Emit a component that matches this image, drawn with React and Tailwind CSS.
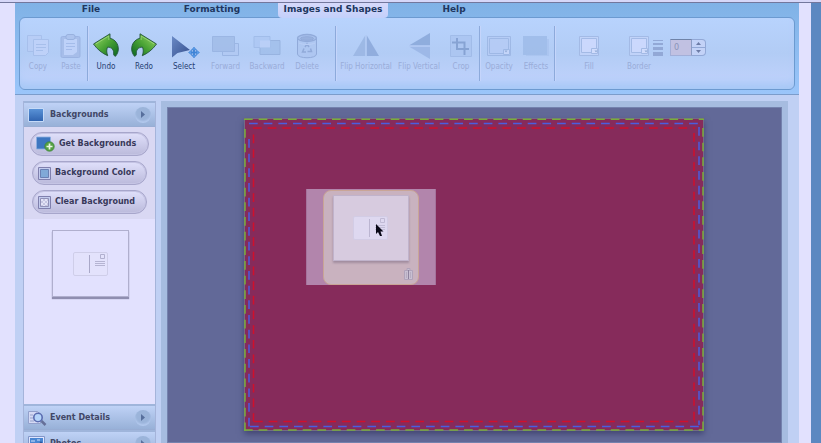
import React from "react";

function CopyIcon() {
  return (
    <svg width="24" height="24" viewBox="0 0 24 24" fill="#b9cdf6" stroke="#a3bbe8" aria-hidden="true">
      <path d="M1.500 1.500h14v16h-14z" />
      <path d="M7.500 5.500h15v13l-3 3h-12z" fill="#c2d3fa" />
      <path d="M10 10.500h10M10 13.500h10M10 16.500h7" />
    </svg>
  );
}

function PasteIcon() {
  return (
    <svg width="24" height="26" viewBox="0 0 24 26" aria-hidden="true">
      <rect x="2" y="3.500" width="19" height="21" rx="1.500" fill="#a3b9e6" stroke="#93abdc" />
      <path d="M5 6h13v13l-4 3H5z" fill="#c2d3fa" />
      <rect x="7" y="1.500" width="9" height="5" rx="2" fill="#a9bfeb" stroke="#8fa7d6" />
      <path d="M7 10.500h9M7 13.500h9M7 16.500h6" stroke="#9fb6e6" />
    </svg>
  );
}

function Arrow({ flip }) {
  const id = flip ? "redoGreen" : "undoGreen";
  return (
    <svg width="28" height="26" viewBox="0 0 28 26" aria-hidden="true">
      <defs>
        <linearGradient id={id} x1="0" y1="0" x2="1" y2="1">
          <stop offset="0" stopColor="#a0dc6a" />
          <stop offset="0.5" stopColor="#4ba436" />
          <stop offset="1" stopColor="#0a6420" />
        </linearGradient>
      </defs>
      <g transform={flip ? "translate(28 0) scale(-1 1)" : undefined}>
        <path
          d="M1.500 11 18 .8v4.400c5.400 1.500 8.300 5.700 8.300 10.800 0 2.800-1 5-2.800 7.300-1-.3-1.500-.8-1.900-1.700.7-4.400-1.700-7.400-6-7.500-1.200 2.400-1.200 5 .1 8.600C10.500 20.500 5.300 16.500 1.500 11z"
          fill={`url(#${id})`} stroke="#24553a" strokeWidth="0.900" strokeLinejoin="round"
        />
        <path d="M4 10.800 16.800 3v4" fill="none" stroke="#c5efa0" strokeWidth="0.800" opacity="0.600" />
      </g>
    </svg>
  );
}

function SelectIcon() {
  return (
    <svg width="32" height="26" viewBox="0 0 32 26" aria-hidden="true">
      <defs>
        <linearGradient id="pointer" x1="0" y1="0" x2="1" y2="1">
          <stop offset="0" stopColor="#6a8ac6" />
          <stop offset="1" stopColor="#36508e" />
        </linearGradient>
      </defs>
      <path d="M4 3v21.500l5.500-4.500L22 17z" fill="url(#pointer)" />
      <path d="M26 15.500v8M22 19.500h8" stroke="#3f84d6" strokeWidth="1.800" />
      <path
        d="M26 14l2.500 3h-5zM26 25l-2.500-3h5zM20.500 19.500l3-2.500v5zM31.500 19.500 28.500 17v5z"
        fill="#5a9dea" stroke="#3b7acb" strokeWidth="0.500"
      />
    </svg>
  );
}

function ForwardIcon() {
  return (
    <svg width="28" height="24" viewBox="0 0 28 24" stroke="#93aedd" aria-hidden="true">
      <path d="M10.500 9.500h16v12h-16z" fill="#b1c8f3" />
      <path d="M.5 2.500h22v15H.5z" fill="#9fbae6" />
    </svg>
  );
}

function BackwardIcon() {
  return (
    <svg width="28" height="24" viewBox="0 0 28 24" aria-hidden="true">
      <path d="M7 6.500h20v14H7z" fill="#9fbde9" stroke="#8fabd9" />
      <path d="M1 2.500h16v11H1z" fill="#adc7f3" stroke="#9bb7e5" />
      <path d="M7 6.500h10v7H7z" fill="#bdd0f8" />
    </svg>
  );
}

function BinIcon() {
  return (
    <svg width="24" height="26" viewBox="0 0 24 26" fill="none" stroke="#869fd0" aria-hidden="true">
      <path d="M2.500 5v16c0 5 19 5 19 0V5" fill="#adc5f0" />
      <ellipse cx="12" cy="5" rx="9.500" ry="3.500" fill="#a3bbe8" strokeWidth="1.300" />
      <ellipse cx="12" cy="5.500" rx="6.500" ry="1.800" fill="#8fa7d6" />
      <path d="M10 14l2-3 2 3M15.500 15.500l1 3h-4M11 19H7.500l1.500-3.500" strokeWidth="1.500" />
      <path d="M4 10c4 2 12 2 16 0" stroke="#bdd0f6" />
    </svg>
  );
}

function FlipHorizontalIcon() {
  return (
    <svg width="26" height="24" viewBox="0 0 26 24" aria-hidden="true">
      <path d="M12.500 1v21H0z" fill="#96b2e0" />
      <path d="M13.500 1v21H26z" fill="#86a3d6" />
      <path d="M13 1v21" stroke="#b9cef6" />
    </svg>
  );
}

function FlipVerticalIcon() {
  return (
    <svg width="26" height="26" viewBox="0 0 26 26" aria-hidden="true">
      <path d="M3 12.500 24 0v12.500z" fill="#83a2d5" />
      <path d="M3 13.500 24 26V13.500z" fill="#96b2e3" />
      <path d="M3 13h21" stroke="#b9cef6" />
    </svg>
  );
}

function CropIcon() {
  return (
    <svg width="22" height="22" viewBox="0 0 22 22" fill="none" aria-hidden="true">
      <path d="M.5.5h21v21H.5z" fill="#aac4f0" stroke="#9bb6e4" />
      <path d="M7 3v11h12M2 7.500h12.500V20" stroke="#7895c8" strokeWidth="2" />
    </svg>
  );
}

function SwatchIcon({ hollow }) {
  return (
    <svg width={hollow ? "24" : "20"} height="20" viewBox={hollow ? "-2 0 24 20" : "0 0 20 20"} aria-hidden="true">
      {hollow ? (
        <g fill="#b6cbf5" stroke="#98b2e0">
          <path d="M-1.500.5h23v19h-23z" />
          <path d="M.5 2.500h19v15H.5z" />
          <path d="M14.500 13.500h6v5h-6z" fill="#cad8fb" />
        </g>
      ) : (
        <g fill="#c5d5fa" stroke="#9eb4e0">
          <path d="M.5.5h19v19H.5z" />
          <path d="M2.500 2.500h15v14h-15z" fill="#d3dcff" />
          <path d="M12.500 12.500h6v5h-6z" fill="#dce2ff" />
        </g>
      )}
      <path d="M15.500 14.500h3l-1.500 2z" fill="#869fcb" />
    </svg>
  );
}

function EffectsIcon() {
  return (
    <svg width="28" height="22" viewBox="0 0 28 22" aria-hidden="true">
      <path d="M4 4h23v17H4z" fill="#a9c3ef" />
      <path d="M1 1h24v19H1z" fill="#9bb9e7" />
    </svg>
  );
}

function Tool({ label, width, enabled, children }) {
  return (
    <button
      type="button"
      disabled={!enabled}
      className={`flex h-full flex-col items-center whitespace-nowrap ${width} ${enabled ? "text-[#243d70]" : "text-[#99acd8]"}`}
    >
      <span className={`mt-3 flex h-8 items-center justify-center ${enabled ? "" : "opacity-75"}`}>{children}</span>
      <span className="leading-[10px]">{label}</span>
    </button>
  );
}

function Divider() {
  return <div className="h-[55px] w-px shrink-0 bg-[#8daadb] shadow-[1px_0_0_#c5d5fb]" />;
}

function Toolbar() {
  return (
    <div
      className="flex h-[73px] items-center overflow-hidden rounded-md border border-[#6c9ad0] bg-linear-to-b from-[#b8d3fd] via-[#b2ccf5] to-[#c2d3fd] pl-px text-[8px] shadow-[inset_0_-10px_8px_-4px_#a6c8f6]"
      style={{ fontFamily: '"DejaVu Sans Condensed", "DejaVu Sans", sans-serif' }}
    >
      <Tool label="Copy" width="w-[34px]"><CopyIcon /></Tool>
      <Tool label="Paste" width="w-8"><PasteIcon /></Tool>
      <Divider />
      <Tool label="Undo" width="w-9" enabled><Arrow /></Tool>
      <Tool label="Redo" width="w-10" enabled><Arrow flip /></Tool>
      <Tool label="Select" width="w-10" enabled><SelectIcon /></Tool>
      <Tool label="Forward" width="w-[43px]"><ForwardIcon /></Tool>
      <Tool label="Backward" width="w-10"><BackwardIcon /></Tool>
      <Tool label="Delete" width="w-10"><BinIcon /></Tool>
      <div className="w-2" />
      <Divider />
      <div className="w-0.5" />
      <Tool label="Flip Horizontal" width="w-14"><FlipHorizontalIcon /></Tool>
      <Tool label="Flip Vertical" width="w-[50px]"><FlipVerticalIcon /></Tool>
      <Tool label="Crop" width="w-[34px]"><CropIcon /></Tool>
      <div className="w-px" />
      <Divider />
      <Tool label="Opacity" width="w-[38px]"><SwatchIcon hollow /></Tool>
      <Tool label="Effects" width="w-9"><EffectsIcon /></Tool>
      <Divider />
      <div className="w-4" />
      <Tool label="Fill" width="w-9"><SwatchIcon /></Tool>
      <div className="w-[18px]" />
      <Tool label="Border" width="w-7"><SwatchIcon /></Tool>
      <div className="flex items-center pb-3">
        <svg width="10" height="18" viewBox="0 0 10 18" fill="#92a8d6" aria-hidden="true">
          <path d="M0 1h10v1H0zM0 4h10v2H0zM0 8h10v3H0zM0 13h10v4H0z" />
        </svg>
        <div className="ml-[7px] flex h-[17px]">
          <input
            aria-label="Border width"
            defaultValue="0"
            className="w-[22px] border border-t-[#6f83a8] border-r-[#8b9cc4] border-b-[#a3afd8] border-l-[#a3afd8] bg-[#c1c1e2] pl-[3px] text-[9px] text-[#8b94b8] outline-none"
          />
          <div className="flex w-[14px] flex-col rounded-r border border-l-0 border-[#92a8d6] bg-[#c3d2f7]">
            <button type="button" aria-label="Increase border width" className="flex flex-1 items-center justify-center border-b border-[#92a8d6]">
              <svg width="5" height="3" viewBox="0 0 5 3" aria-hidden="true"><path d="M0 3 2.500 0 5 3z" fill="#6c7ba6" /></svg>
            </button>
            <button type="button" aria-label="Decrease border width" className="flex flex-1 items-center justify-center">
              <svg width="5" height="3" viewBox="0 0 5 3" aria-hidden="true"><path d="M0 0 2.500 3 5 0z" fill="#6c7ba6" /></svg>
            </button>
          </div>
        </div>
      </div>
    </div>
  );
}

function Tab({ label, width, active }) {
  return (
    <button
      type="button"
      role="tab"
      aria-selected={!!active}
      className={`flex h-[15px] justify-center whitespace-nowrap leading-[13px] ${width} ${active ? "relative rounded-b-sm bg-linear-to-b from-[#d6d8fb] to-[#c3d0fa]" : ""}`}
    >
      {label}
    </button>
  );
}

function PictureIcon() {
  return (
    <svg width="16" height="14" viewBox="0 0 16 14" aria-hidden="true">
      <defs>
        <linearGradient id="sky" x1="0" y1="0" x2="0" y2="1">
          <stop offset="0" stopColor="#5b94d8" />
          <stop offset="1" stopColor="#2f62ae" />
        </linearGradient>
      </defs>
      <path d="M.5.5h15v13H.5z" fill="url(#sky)" stroke="#c5daf8" />
    </svg>
  );
}

function DetailsIcon() {
  return (
    <svg width="19" height="16" viewBox="0 0 19 16" aria-hidden="true">
      <path d="M.5 1.500h9l3 3v9H.5z" fill="#d5daf5" stroke="#93a0cc" />
      <path d="M2 5h3M2 8h3M2 11h4" stroke="#98a3cb" />
      <circle cx="10" cy="7.500" r="4.200" fill="#b5d4fa" stroke="#5a6cb0" strokeWidth="1.600" />
      <path d="M13.500 11l4 4" stroke="#656f98" strokeWidth="2.500" />
    </svg>
  );
}

function PhotosIcon() {
  return (
    <svg width="17" height="15" viewBox="0 0 17 15" aria-hidden="true">
      <path d="M.5.5h16v14H.5z" fill="#dfe6ff" stroke="#8296c8" />
      <path d="M2 2h13v11H2z" fill="#4a86d2" />
      <path d="M2 12l4-4 3 2 4-5 2 3v5H2z" fill="#27549c" />
      <path d="M3 5h4M9 4h3" stroke="#cfe2ff" />
    </svg>
  );
}

function SectionHeader({ label, icon }) {
  return (
    <button
      type="button"
      className="flex h-[26px] w-full shrink-0 items-center border-t-2 border-b border-t-[#9fb5db] border-b-[#98add4] bg-linear-to-b from-[#bfd2f6] to-[#98b1d8] pr-1 pl-1 text-[#414766]"
    >
      <span className="flex w-[22px] items-center">{icon}</span>
      <span className="flex-1 text-left leading-[12px]">{label}</span>
      <span className="flex size-4 items-center justify-center rounded-full bg-[#9bb4da] shadow-[inset_0_-2px_2px_#b3c9ee]">
        <svg width="4" height="7" viewBox="0 0 4 7" aria-hidden="true"><path d="M0 0 4 3.500 0 7z" fill="#576f9c" /></svg>
      </span>
    </button>
  );
}

function PillButton({ label, width, children }) {
  return (
    <button
      type="button"
      className={`flex h-6 items-center gap-1 whitespace-nowrap rounded-full border border-[#a7a6cb] bg-linear-to-b from-[#e0e0fb] to-[#bbbadb] pl-[5px] text-[#38395a] shadow-[inset_0_0_0_1px_#c5c4e4] ${width}`}
    >
      {children}
      <span className="leading-[12px]">{label}</span>
    </button>
  );
}

function AddPictureIcon() {
  return (
    <svg width="19" height="16" viewBox="0 0 19 16" aria-hidden="true">
      <path d="M.5 1h14v12H.5z" fill="#3d76c0" stroke="#8eb0e0" strokeWidth="0.800" />
      <circle cx="13.500" cy="10.500" r="4.800" fill="#55a044" stroke="#397f38" strokeWidth="0.600" />
      <path d="M13.500 7.500v6M10.500 10.500h6" stroke="#eaf7e2" strokeWidth="1.700" />
    </svg>
  );
}

function ColorIcon({ clear }) {
  return (
    <svg width="13" height="13" viewBox="0 0 13 13" aria-hidden="true">
      <path d="M.5.5h12v12H.5z" fill="#c3cbee" stroke="#8080ae" />
      <path d="M2.500 2.500h8v8h-8z" fill={clear ? "#c5c6e2" : "#80a9d8"} stroke={clear ? "#9191b8" : "#6a80b4"} />
      {clear && <path d="M3 3h2v2H3zM7 3h2v2H7zM5 5h2v2H5zM9 5h1v2H9zM3 7h2v2H3zM7 7h2v2H7zM5 9h2v1H5z" fill="#e3e3f7" />}
    </svg>
  );
}

function Postcard() {
  return (
    <svg width="35" height="24" viewBox="0 0 35 24" fill="none" aria-hidden="true">
      <rect x="0.500" y="0.500" width="34" height="23" rx="1.500" fill="#e3e2fc" stroke="#cfcee9" />
      <path d="M16.500 3v18" stroke="#a9a8c8" />
      <path d="M27.500 2.500h4v4h-4z" stroke="#b1b0cf" />
      <path d="M22 9.500h10M22 11.500h10M22 13.500h10" stroke="#b5b4d2" />
    </svg>
  );
}

function Sidebar() {
  return (
    <aside className="mt-[6px] flex w-[133px] shrink-0 flex-col border-x border-[#a5b4da] bg-[#e2e1fe] text-[8px] font-bold">
      <SectionHeader label="Backgrounds" icon={<PictureIcon />} />
      <div className="flex flex-col items-center gap-[5px] bg-[#d9d8f3] py-[5px]">
        <PillButton label="Get Backgrounds" width="w-[119px]"><AddPictureIcon /></PillButton>
        <PillButton label="Background Color" width="w-[115px]"><ColorIcon /></PillButton>
        <PillButton label="Clear Background" width="w-[115px]"><ColorIcon clear /></PillButton>
      </div>
      <div className="flex h-[185px] shrink-0 justify-center pt-[11px] pl-px">
        <div className="flex h-[67px] w-[77px] items-center justify-center border border-[#b0afce] bg-[#e2e1fe] shadow-[0_2px_1px_#8f8eb0]">
          <Postcard />
        </div>
      </div>
      <SectionHeader label="Event Details" icon={<DetailsIcon />} />
      <SectionHeader label="Photos" icon={<PhotosIcon />} />
    </aside>
  );
}

function Guides() {
  return (
    <svg className="block" width="460" height="313" viewBox="0 0 460 313" fill="none" aria-hidden="true">
      <path d="M.5.5h459v312H.5z" stroke="#756b85" />
      <g strokeDasharray="8.700 5.970" strokeWidth="1.500">
        <g stroke="#78ad3c">
          <path d="M0 1.250h460M459 10v303M0 312h460M1 11v302" />
        </g>
        <g stroke="#4a5ee0">
          <path d="M5 5.500h450M455 9v298M6 308.500h450M5 21v288" />
        </g>
        <g stroke="#d0102c">
          <path d="M9 10h442M450 15v288M10 303.500h441M9.500 16.500v287" />
        </g>
      </g>
    </svg>
  );
}

function DragGhost() {
  return (
    <div className="absolute top-[71px] left-[62px] flex h-24 w-[130px] justify-center border-x border-[#a5739c] bg-[#b285ac] pt-px">
      <div className="flex w-24 flex-col items-center rounded-lg border border-[#c9a596] bg-[#c9b2bf] pt-1">
        <div className="flex h-[66px] w-[76px] items-center justify-center border border-[#c0b3cb] bg-[#d7cbdf] shadow-[0_2px_2px_#a18d9f]">
          <div className="opacity-60"><Postcard /></div>
        </div>
        <svg className="mt-[7px] mr-[5px] self-end" width="9" height="12" viewBox="0 0 9 12" aria-hidden="true">
          <path d="M.5 2.500h8v9h-8zM3 .5h3v2H3z" fill="#c8bfd2" stroke="#b0a3ba" />
          <path d="M4.500 2v9" stroke="#8d829e" />
          <path d="M2.500 4v6M6.500 4v6" stroke="#b7acc1" />
        </svg>
      </div>
    </div>
  );
}

function Workspace() {
  return (
    <main className="ml-[5px] mt-[6px] mr-[11px] flex min-w-0 flex-1 border-6 border-b-0 border-[#a6bce0]">
      <div className="flex flex-1 items-start justify-center overflow-hidden border border-[#7482ae] bg-[#626998] pt-[10px] pr-0.5">
        <div className="relative shrink-0 bg-[#862b5b] shadow-[0_3px_6px_#424672]">
          <Guides />
          <DragGhost />
          <svg className="absolute top-[106px] left-[131px]" width="9" height="13" viewBox="0 0 9 13" aria-hidden="true">
            <path d="M1 0v10l2-2 2 4h2L5.500 7.500h3z" fill="#090817" />
          </svg>
        </div>
      </div>
    </main>
  );
}

export default function App() {
  return (
    <div
      className="flex h-screen flex-col overflow-hidden bg-[#e2e1fe]"
      style={{ fontFamily: '"DejaVu Sans", Verdana, sans-serif' }}
    >
      <div className="h-[3px] shrink-0 border-b border-[#73779c] bg-[#d6d7f8]" />
      <div className="flex min-h-0 flex-1">
        <div className="w-[15px] shrink-0" />
        <div className="flex min-w-0 flex-1 flex-col bg-[#c0d0f4]">
          <header className="shrink-0 border-b border-[#7b9ccb] bg-linear-to-b from-[#80b2e6] to-[#9ac5fa] px-1 pb-1">
            <div role="tablist" className="-mb-px flex text-[9px] font-bold text-[#20365f]">
              <Tab label="File" width="w-36" />
              <Tab label="Formatting" width="w-[98px]" />
              <div className="w-[17px]" />
              <Tab label="Images and Shapes" width="w-[110px]" active />
              <Tab label="Help" width="w-[132px]" />
            </div>
            <Toolbar />
          </header>
          <div className="flex min-h-0 flex-1 pl-2">
            <Sidebar />
            <Workspace />
          </div>
        </div>
        <div className="w-3 shrink-0" />
        <div className="w-[10px] shrink-0 bg-[#5c88c1]" />
      </div>
    </div>
  );
}
